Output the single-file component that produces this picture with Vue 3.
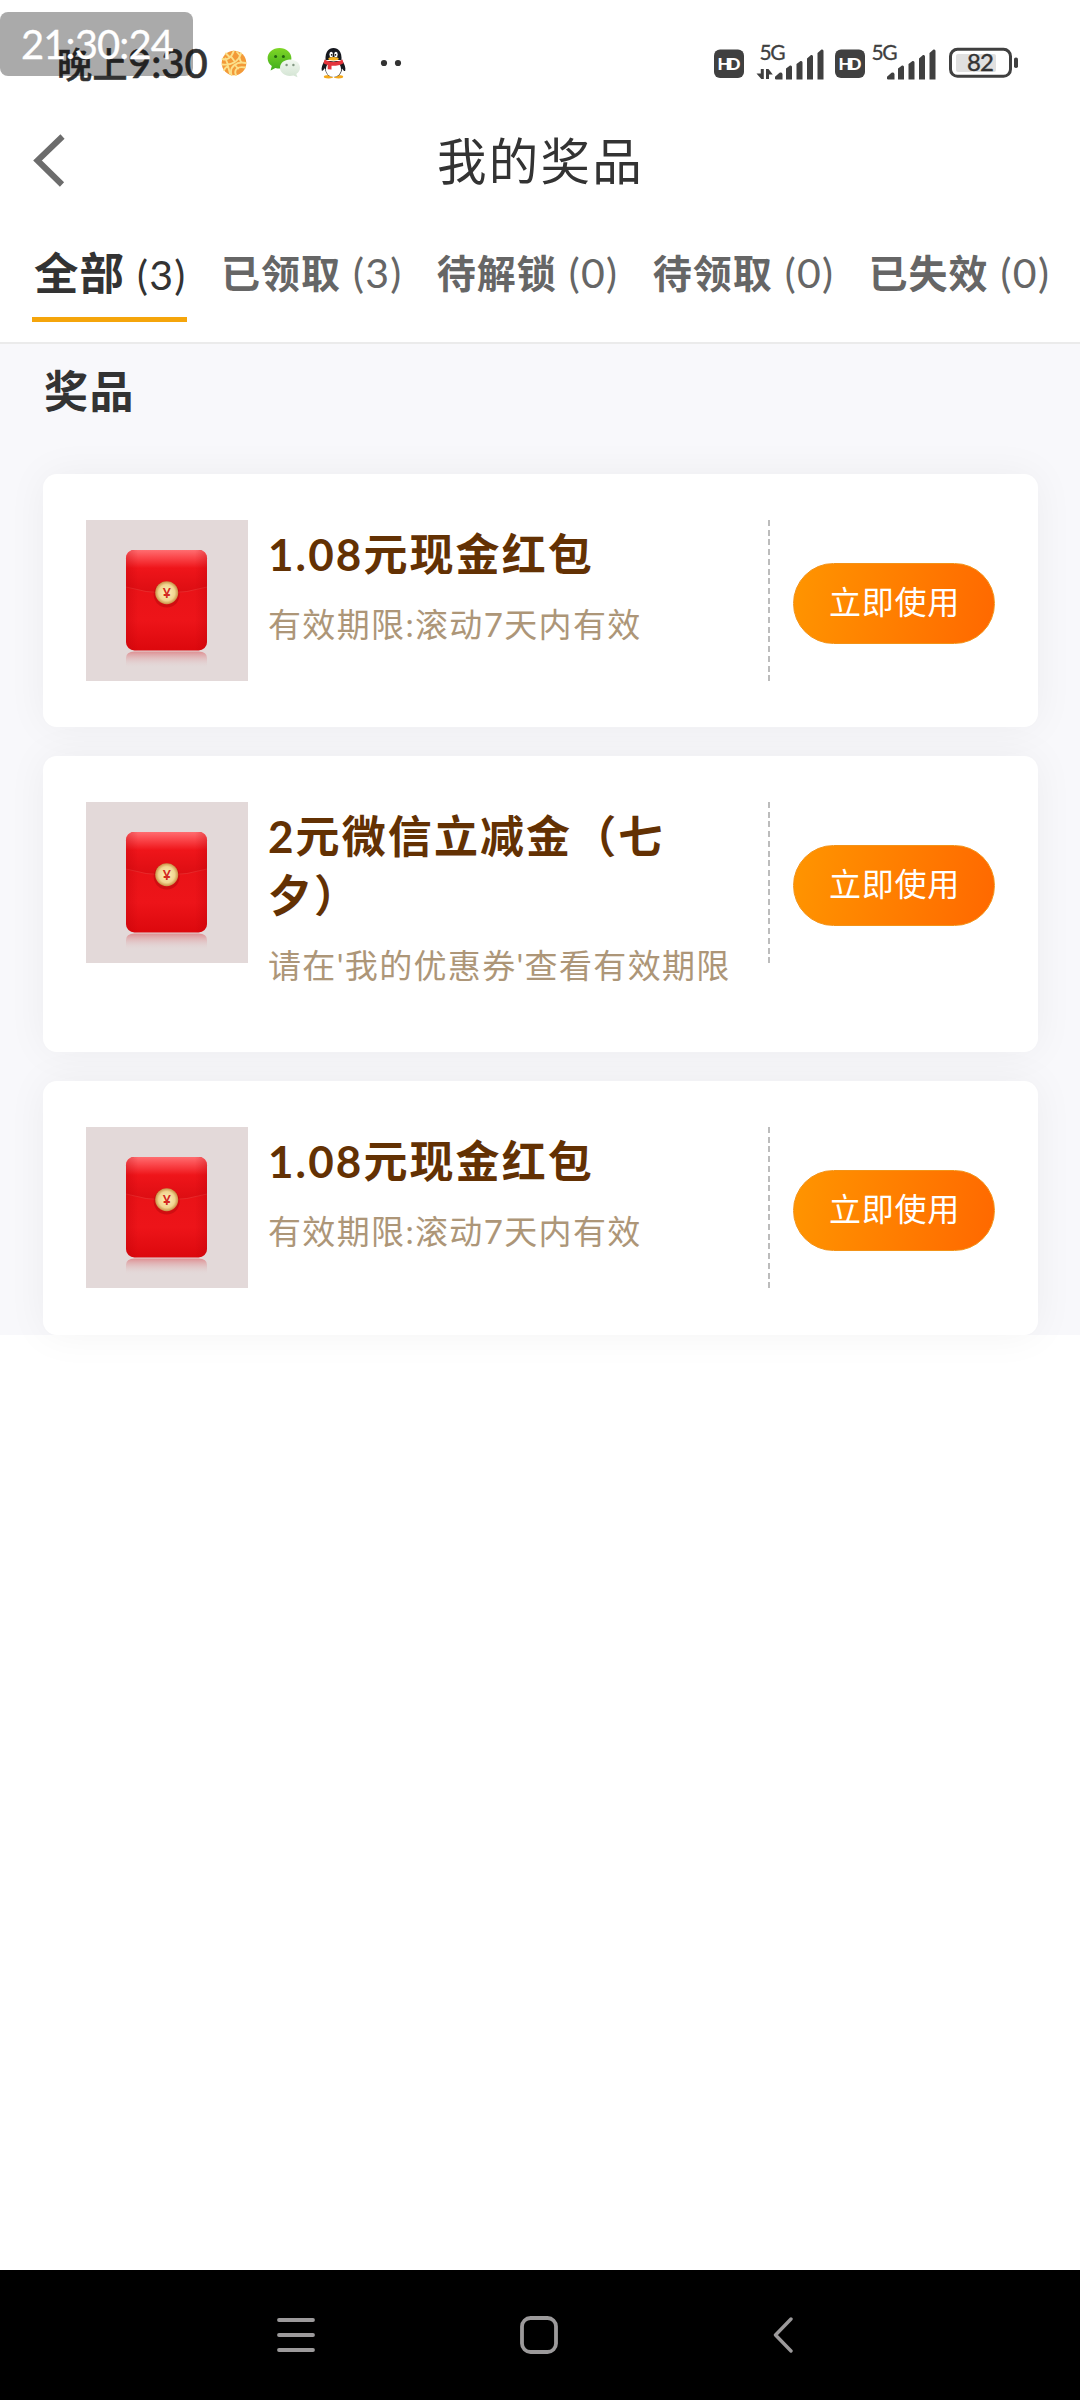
<script setup>
const tabs = [
  { label: '全部', count: 3, active: true },
  { label: '已领取', count: 3 },
  { label: '待解锁', count: 0 },
  { label: '待领取', count: 0 },
  { label: '已失效', count: 0 },
]
const prizes = [
  { title: '1.08元现金红包', desc: '有效期限:滚动7天内有效' },
  { title: '2元微信立减金（七夕）', desc: "请在'我的优惠券'查看有效期限", tall: true },
  { title: '1.08元现金红包', desc: '有效期限:滚动7天内有效' },
]
</script>

<template>
  <div class="screen">
    <div class="status">
      <span class="clock"><span class="clock-cn">晚上</span>9:30</span>
      <svg class="ball" width="26" height="26" viewBox="0 0 26 26">
        <circle cx="13" cy="13" r="12.3" fill="#f39a38" />
        <g fill="none" stroke="#fbe08a" stroke-width="1.900" stroke-linecap="round">
          <path d="M1.500 9c4 1.500 9-1 11-7.500M5 3.500l3 3M1.500 14.500c9 1 16-3 18.500-11M4.500 8.500l2 5M10 6.500l3 4M16 2l2.500 3M3 20c1-2 2-3 4-4l2 7.500" />
          <path d="M10.500 25c-2.500-8 5-14 14-12M15 25c-2.500-5.500 2-9 9-7.500M14 15l3 3.500M18.500 8l1.500 4.500" />
        </g>
      </svg>
      <svg class="wechat" width="34" height="30" viewBox="0 0 34 30">
        <defs>
          <linearGradient id="wc" x1="0" y1="0" x2="0" y2="1"><stop offset="0" stop-color="#7fd626" /><stop offset="1" stop-color="#3fae1c" /></linearGradient>
          <linearGradient id="wd" x1="0" y1="0" x2="0" y2="1"><stop offset="0" stop-color="#f2f8f0" /><stop offset="1" stop-color="#d3e4d3" /></linearGradient>
        </defs>
        <path d="M12.500 0C5.800 0 .6 4.400 .6 10.300c0 3.300 1.700 6 4.200 7.700L3.600 22.500l4.800-2.500c1.300.4 2.700.6 4.100.6 6.700 0 11.900-4.400 11.900-10.300S19.200 0 12.500 0z" fill="url(#wc)" />
        <circle cx="8.600" cy="8.500" r="1.500" fill="#24650f" /><circle cx="16.400" cy="8.500" r="1.500" fill="#24650f" />
        <path d="M23 11.500c-5.600 0-10 3.600-10 8.200s4.400 8.200 10 8.200c1.200 0 2.400-.2 3.500-.5l4 1.800-1.200-3.200c2.300-1.500 3.700-3.700 3.700-6.300 0-4.600-4.400-8.200-10-8.200z" fill="url(#wd)" />
        <circle cx="19.600" cy="17" r="1.200" fill="#829782" /><circle cx="26.400" cy="17" r="1.200" fill="#829782" />
      </svg>
      <svg class="qq" width="28" height="32" viewBox="0 0 28 32">
        <ellipse cx="8.500" cy="29.800" rx="4.700" ry="1.700" fill="#f5a91b" /><ellipse cx="18.500" cy="29.800" rx="4.700" ry="1.700" fill="#f5a91b" />
        <path d="M4.500 14c-2 3-3.500 7-2.700 9.700 1 .6 2.200-1.200 3.100-2.600C5.500 27 9 30 13.500 30s8-3 8.700-8.600c.8 1.400 2 3.200 3 2.600.8-3-.7-7-2.700-10z" fill="#16181f" />
        <ellipse cx="13.500" cy="22.300" rx="7.700" ry="7.800" fill="#fff" />
        <path d="M5.500 13C5 5 8.500 1 13.500 1S22 5 21.500 13z" fill="#16181f" />
        <ellipse cx="11.200" cy="7.500" rx="1.800" ry="2.700" fill="#fff" /><ellipse cx="15.900" cy="7.500" rx="1.800" ry="2.700" fill="#fff" />
        <circle cx="11.700" cy="7.800" r=".9" fill="#111" /><circle cx="15.400" cy="7.800" r=".9" fill="#111" />
        <ellipse cx="13.500" cy="11.800" rx="5.200" ry="1.700" fill="#f8b31f" />
        <path d="M4.500 12.500c5 3.300 13 3.300 18 0l1 3.700c-3.500 2-7.500 2.800-12 2.600v3.700l-3.800-.3v-4.300C6 17.400 4.700 17 3.500 16.200z" fill="#e4343c" />
      </svg>
      <svg class="dots" width="22" height="8" viewBox="0 0 22 8"><circle cx="4" cy="4" r="3.100" fill="#333" /><circle cx="18" cy="4" r="3.100" fill="#333" /></svg>

      <div class="status-right">
        <svg v-for="n in 2" :key="n" class="signal" width="121" height="48" viewBox="0 -4 121 48">
          <rect x="0" y="8.500" width="30" height="28.500" rx="6" fill="#404040" />
          <text class="hd" x="15" y="28.700" text-anchor="middle" textLength="23">HD</text>
          <g :transform="n === 1 ? '' : 'translate(-9 0)'">
            <text class="g5" x="45.500" y="19" textLength="26">5G</text>
            <path v-if="n === 1" fill="#404040" d="M46.800 28h3v10h-2.500l-4.800-5.500h4.300zM52 38V28h2.500l4.300 5.500H55V38z" />
            <path fill="#404040" d="M61 38v-2.300l4.500-4q2.500-.6 3 1.300v5.500h-6.500zM72 27.500l4-3q2-.5 2 1.500v12.500h-6zM82.500 23l4-3q2-.5 2 1.500v17h-6zM93 17.500l4-3.500q2-.5 2 1.500v23h-6zM103.500 12l4-3.500q2-.5 2 1.500v28.500h-6z" />
          </g>
        </svg>
        <svg class="battery" width="70" height="32" viewBox="0 0 70 32">
          <rect x="1.500" y="2.300" width="60" height="27" rx="7" fill="#fff" stroke="#404040" stroke-width="3" />
          <rect x="7" y="7" width="40" height="18" rx="2" fill="#e0e0e0" />
          <rect x="65" y="10.500" width="4" height="10.500" rx="1.800" fill="#404040" />
          <text class="pct" x="31.500" y="24" text-anchor="middle" textLength="27">82</text>
        </svg>
      </div>
      <div class="stamp">21:30:24</div>
    </div>

    <header class="head">
      <svg class="back" width="34" height="56" viewBox="0 0 34 56"><path d="M30.500 3.500L5.500 27.500l24.500 24" fill="none" stroke="#6c6c6c" stroke-width="6" /></svg>
      <h1>我的奖品</h1>
    </header>

    <nav class="tabs">
      <div v-for="t in tabs" :key="t.label" class="tab" :class="{ active: t.active }">
        <span class="name">{{ t.label }}</span><span class="count">({{ t.count }})</span>
      </div>
    </nav>

    <main>
      <h2>奖品</h2>
      <div class="cards">
        <section v-for="(p, i) in prizes" :key="i" class="card" :class="{ tall: p.tall }">
          <svg class="thumb" width="162" height="161" viewBox="0 0 162 161">
            <defs>
              <linearGradient id="body" x1="0" y1="0" x2="0" y2="1"><stop offset="0" stop-color="#dc0c12" /><stop offset=".25" stop-color="#e81216" /><stop offset=".7" stop-color="#ed1419" /><stop offset="1" stop-color="#dc080d" /></linearGradient>
              <linearGradient id="flap" x1="0" y1="0" x2="0" y2="1"><stop offset="0" stop-color="#ff6d70" /><stop offset=".16" stop-color="#fb4a4e" /><stop offset=".42" stop-color="#ef151a" /><stop offset="1" stop-color="#dc0d12" /></linearGradient>
              <linearGradient id="side"><stop offset="0" stop-color="#b80008" stop-opacity=".3" /><stop offset=".15" stop-color="#b80008" stop-opacity="0" /><stop offset=".85" stop-color="#b80008" stop-opacity="0" /><stop offset="1" stop-color="#b80008" stop-opacity=".3" /></linearGradient>
              <linearGradient id="refl" x1="0" y1="0" x2="0" y2="1"><stop offset="0" stop-color="#d9444a" stop-opacity=".5" /><stop offset="1" stop-color="#e3d9d9" stop-opacity="0" /></linearGradient>
              <radialGradient id="coin"><stop offset="0" stop-color="#fff0ba" /><stop offset=".7" stop-color="#f1d590" /><stop offset="1" stop-color="#c98f45" /></radialGradient>
            </defs>
            <rect width="162" height="161" fill="#e3d9d9" />
            <path d="M40 148v-10q0-6.500 8.500-6.500h64q8.500 0 8.500 6.500v10z" fill="url(#refl)" />
            <rect x="40" y="30" width="81" height="100.500" rx="8.500" fill="url(#body)" />
            <path d="M40 67V38.500Q40 30 48.500 30h64q8.500 0 8.500 8.500V67Q101 73 80.500 73T40 67z" fill="url(#flap)" />
            <path d="M40 67Q60 73 80.500 73T121 67" fill="none" stroke="#f04a45" stroke-opacity=".55" stroke-width=".8" />
            <rect x="40" y="30" width="81" height="100.500" rx="8.500" fill="url(#side)" />
            <circle cx="80.700" cy="74.500" r="13" fill="#a80508" opacity=".4" />
            <circle cx="80.700" cy="72.700" r="11.500" fill="url(#coin)" />
            <text class="yen" x="80.700" y="77.700" text-anchor="middle">¥</text>
          </svg>
          <div class="info">
            <div class="title">{{ p.title }}</div>
            <div class="desc">{{ p.desc }}</div>
          </div>
          <div class="divider"></div>
          <button class="use">立即使用</button>
        </section>
      </div>
    </main>

    <footer class="sysnav">
      <svg width="38" height="38" viewBox="0 0 38 38"><path d="M2 4h34M2 19h34M2 34h34" stroke="#9c9a9b" stroke-width="3.800" stroke-linecap="round" /></svg>
      <svg class="home" width="38" height="38" viewBox="0 0 38 38"><rect x="2" y="2" width="34" height="34" rx="8.500" fill="none" stroke="#9c9a9b" stroke-width="3.800" /></svg>
      <svg width="20" height="38" viewBox="0 0 20 38"><path d="M18 3L2.500 19 18 35" fill="none" stroke="#9c9a9b" stroke-width="3.400" stroke-linecap="round" stroke-linejoin="round" /></svg>
    </footer>
  </div>
</template>

<style>
body { background: #fff; }
</style>

<style scoped>
.screen {
  width: 1080px; height: 2400px; display: flex; flex-direction: column;
  background: #fff; color: #333; overflow: hidden;
  font-family: Lato, "Noto Sans CJK SC", sans-serif;
}
.status { position: relative; height: 110px; flex: none; display: flex; align-items: center; padding: 16px 61px 0 57px; box-sizing: border-box; }
.clock { width: 164px; font-size: 40px; line-height: 40px; font-weight: 500; white-space: nowrap; -webkit-text-stroke: .6px #333; }
.clock-cn { font-size: 35px; letter-spacing: .5px; }
.ball { margin-right: 20px; }
.wechat { margin-right: 19px; }
.qq { margin-right: 32px; }
.status-right { margin-left: auto; display: flex; align-items: center; }
.signal { margin-bottom: 5px; overflow: visible; }
.battery { margin-left: -7px; }
.hd { font: 900 17px Lato, sans-serif; fill: #fff; }
.g5 { font: 400 21px Lato, sans-serif; fill: #404040; stroke: #404040; stroke-width: .3px; }
.pct { font: 400 24px Lato, sans-serif; fill: #333; stroke: #333; stroke-width: .4px; }
.stamp {
  position: absolute; left: 0; top: 12px; width: 193px; height: 64px; border-radius: 8px;
  background: rgba(0, 0, 0, .333); color: #fff; font-size: 40px; line-height: 65px;
  letter-spacing: -.9px; padding-left: 21px; box-sizing: border-box; -webkit-text-stroke: .3px #fff;
}
.head { height: 102px; flex: none; display: flex; align-items: center; padding: 0 31px 0 32px; }
.back { flex: none; margin-right: -34px; }
.head h1 { flex: 1; margin: 0; text-align: center; font-size: 49.500px; line-height: 60px; font-weight: 400; letter-spacing: 2.300px; }
.tabs { height: 132px; flex: none; display: flex; padding: 0 0 0 32px; gap: 34.300px; border-bottom: 2px solid #ebebeb; box-sizing: border-box; }
.tab { height: 110px; box-sizing: border-box; display: flex; align-items: baseline; color: #666; white-space: nowrap; line-height: 121px; }
.name { font-size: 39px; font-weight: 700; letter-spacing: 1px; }
.count { font-size: 41px; font-weight: 400; margin-left: 12px; letter-spacing: 1.300px; }
.tab.active { color: #333; border-bottom: 5px solid #f5a50b; padding-left: 2px; }
.tab.active .name { font-size: 44.500px; letter-spacing: 1px; }
main { flex: none; background: #f8f8fb; height: 991px; }
main h2 { margin: 0; padding: 14px 0 0 44px; height: 130px; box-sizing: border-box; font-size: 44px; line-height: 66px; font-weight: 700; letter-spacing: 1.600px; }
.cards { display: flex; flex-direction: column; gap: 28.500px; padding: 0 42px 0 43px; }
.card { height: 253px; box-sizing: border-box; display: flex; align-items: flex-start; padding: 46px 43px 0; border-radius: 14px; background: #fff; box-shadow: 0 0 40px rgba(0, 0, 0, .05); }
.card.tall { height: 296.500px; }
.card:last-child { height: 254px; }
.thumb { flex: none; display: block; }
.info { width: 501px; margin-left: 20px; flex: none; }
.title { width: 430px; margin-top: 5px; font-size: 44px; line-height: 59px; font-weight: 700; letter-spacing: 2.100px; color: #633103; }
.desc { margin-top: 13px; font-size: 33px; line-height: 54px; letter-spacing: 1.350px; color: #ad9678; white-space: nowrap; }
.divider { flex: none; width: 2px; height: 161px; margin-left: -1px; background: repeating-linear-gradient(#bcbcbc 0 6px, transparent 6px 9.700px); }
.use {
  flex: none; margin: 43px 0 0 23px; width: 202px; height: 81px; border-radius: 41px; padding: 0 0 7px 1px;
  border: 1px solid #f39318; background: linear-gradient(100deg, #ff9500, #ff6800);
  color: #fff; font-family: inherit; font-size: 32px; letter-spacing: .8px;
}
.yen { font: 700 14px Lato, sans-serif; fill: #d32a20; }
.sysnav { margin-top: auto; height: 130px; flex: none; background: #000; display: flex; align-items: center; justify-content: space-between; padding: 0 287px 0 277px; box-sizing: border-box; }
.home { margin-right: 10px; }
</style>
